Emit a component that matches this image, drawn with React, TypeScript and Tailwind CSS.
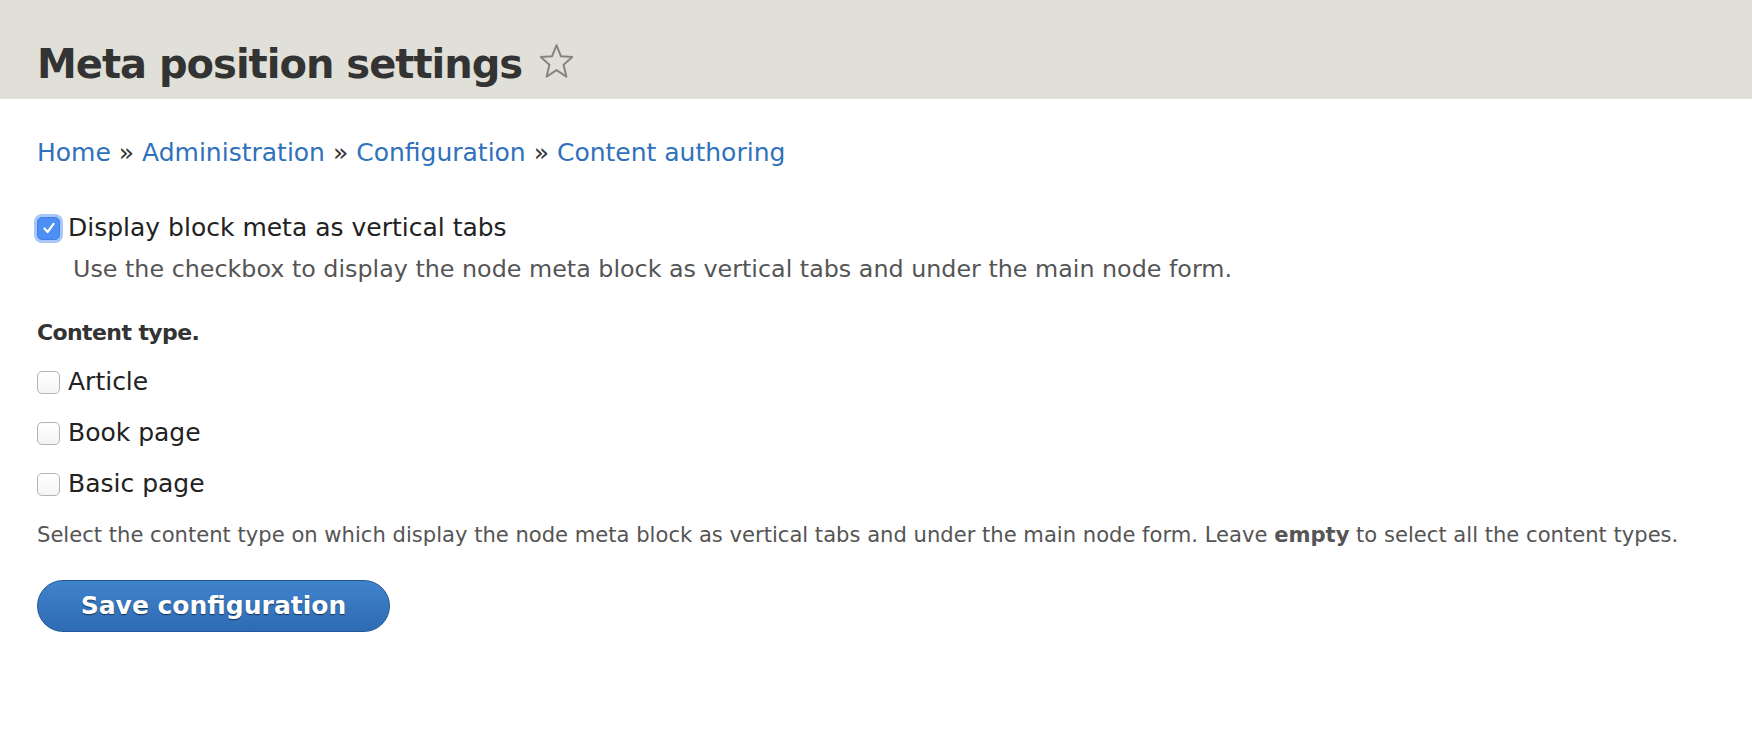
import { useState } from "react";

const contentTypes = ["Article", "Book page", "Basic page"];

const Checkbox = ({ checked, onChange }: { checked: boolean; onChange: () => void }) => (
  <button
    type="button"
    onClick={onChange}
    className={`flex h-[23px] w-[23px] shrink-0 items-center justify-center rounded-[5px] border ${
      checked
        ? "border-[#3f7fe8] bg-[#4d8ff5] shadow-[0_0_0_3px_#a9c7f7]"
        : "border-[#b4b4b4] bg-gradient-to-b from-white to-[#f4f4f4]"
    }`}
  >
    {checked && (
      <svg width="14" height="14" viewBox="0 0 14 14" fill="none">
        <path d="M2.5 7.5 L5.6 11 L11.5 2.8" stroke="white" strokeWidth="2.2" strokeLinecap="round" strokeLinejoin="round" />
      </svg>
    )}
  </button>
);

export default function App() {
  const [verticalTabs, setVerticalTabs] = useState(true);
  const [selected, setSelected] = useState<string[]>([]);

  const toggleType = (name: string) =>
    setSelected((prev) => (prev.includes(name) ? prev.filter((n) => n !== name) : [...prev, name]));

  return (
    <div className="min-h-[744px] bg-white text-[#333]" style={{ fontFamily: '"DejaVu Sans", "Lucida Grande", sans-serif' }}>
      {/* Page title */}
      <div className="h-[99px] bg-[#e0e0d8] px-[37px] pt-[40px]">
        <h1 className="flex items-center text-[40px] font-bold leading-[48px] tracking-[-1px] text-[#333]">
          Meta position settings
          <svg className="ml-[16px] mt-[-5px]" width="37" height="37" viewBox="0 0 33 34" fill="none">
            <path
              d="M16.5 2 L20.6 12.2 L31 12.9 L23 19.9 L25.6 31 L16.5 24.9 L7.4 31 L10 19.9 L2 12.9 L12.4 12.2 Z"
              stroke="#84847a"
              strokeWidth="1.8"
              strokeLinejoin="round"
            />
          </svg>
        </h1>
      </div>

      <div className="px-[37px]">
        {/* Breadcrumb */}
        <nav className="mt-[39px] text-[25px] leading-[30px] text-[#333]">
          <a href="#" className="text-[#2f71bb]">Home</a> »{" "}
          <a href="#" className="text-[#2f71bb]">Administration</a> »{" "}
          <a href="#" className="text-[#2f71bb]">Configuration</a> »{" "}
          <a href="#" className="text-[#2f71bb]">Content authoring</a>
        </nav>

        {/* Vertical tabs option */}
        <div className="mt-[45px] flex items-center gap-[8px]">
          <Checkbox checked={verticalTabs} onChange={() => setVerticalTabs(!verticalTabs)} />
          <span className="text-[25px] leading-[30px] text-[#222]">Display block meta as vertical tabs</span>
        </div>
        <p className="ml-[36px] mt-[11px] text-[23.8px] leading-[30px] text-[#555]">
          Use the checkbox to display the node meta block as vertical tabs and under the main node form.
        </p>

        {/* Content types */}
        <h2 className="mt-[34px] text-[22px] font-bold leading-[30px] tracking-[-0.6px] text-[#333]">Content type.</h2>
        <div className="mt-[19px] flex flex-col gap-[21px]">
          {contentTypes.map((name) => (
            <label key={name} className="flex items-center gap-[8px]">
              <Checkbox checked={selected.includes(name)} onChange={() => toggleType(name)} />
              <span className="text-[25px] leading-[30px] text-[#222]">{name}</span>
            </label>
          ))}
        </div>
        <p className="mt-[22px] text-[21.1px] leading-[28px] text-[#555]">
          Select the content type on which display the node meta block as vertical tabs and under the main node form. Leave{" "}
          <strong className="font-bold">empty</strong> to select all the content types.
        </p>

        {/* Submit */}
        <button
          type="button"
          className="mt-[31px] h-[52px] w-[353px] rounded-full border border-[#22589a] bg-gradient-to-b from-[#3f83cc] to-[#2e6bb4] text-[25px] font-bold text-white [text-shadow:0_1px_1px_rgba(0,0,0,0.55)]"
        >
          Save configuration
        </button>
      </div>
    </div>
  );
}
